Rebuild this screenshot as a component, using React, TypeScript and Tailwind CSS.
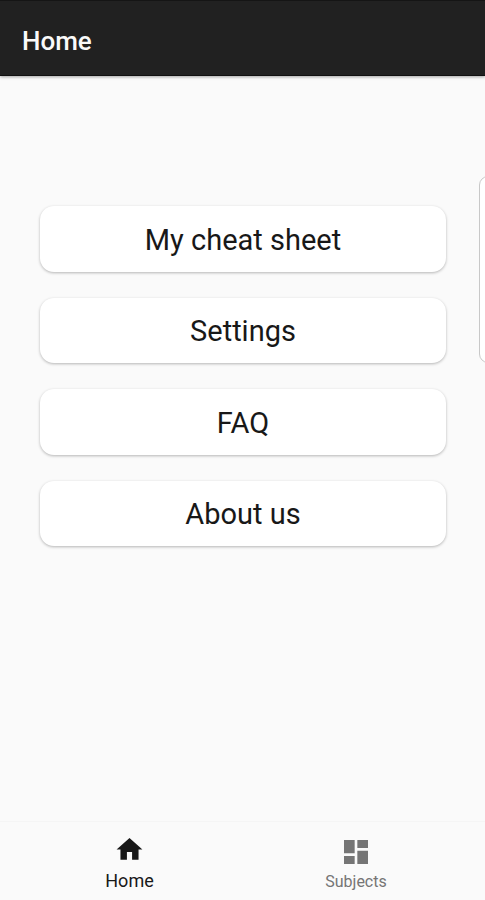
const items = ["My cheat sheet", "Settings", "FAQ", "About us"];

export default function App() {
  return (
    <div className="relative flex h-[900px] w-[485px] flex-col overflow-hidden bg-[#fafafa] font-[Roboto,sans-serif] text-[#181818]">
      <header className="flex h-[76px] shrink-0 items-center border-b border-t border-b-[#111] border-t-[#151515] bg-[#212121] pb-0 pl-[22px] pt-[5px] shadow-[0_1px_3px_rgba(0,0,0,0.35)]">
        <h1 className="text-[26px] font-medium leading-8 text-[#fafafa]">Home</h1>
      </header>
      <main className="flex flex-1 flex-col gap-[26px] px-10 pt-[130px]">
        {items.map((label) => (
          <button key={label} className="flex h-[65.5px] w-[406px] shrink-0 items-center justify-center rounded-[14px] bg-white pt-[3px] text-[29px] shadow-[0_1px_3px_rgba(0,0,0,0.28)]">
            {label}
          </button>
        ))}
      </main>
      <div className="absolute left-[479px] top-[176px] h-[187px] w-6 rounded-[9px] border border-[#c8c8c8] bg-white" />
      <nav className="flex h-[79px] shrink-0 border-t border-[#f5f5f5] bg-[#fafafa]">
        <div className="flex w-[259px] flex-col items-center pt-[12px]">
          <svg viewBox="0 0 24 24" className="h-[31px] w-[31px]" fill="#181818"><path d="M10 20v-6h4v6h5v-8h3L12 3 2 12h3v8z" /></svg>
          <span className="mt-[4px] text-[18px] leading-6">Home</span>
        </div>
        <div className="flex w-[194px] flex-col items-center pt-[14px] text-[#757575]">
          <svg viewBox="0 0 24 24" className="h-[32px] w-[32px]" fill="currentColor"><path d="M3 13h8V3H3v10zm0 8h8v-6H3v6zm10 0h8V11h-8v10zm0-18v6h8V3h-8z" /></svg>
          <span className="mt-[2px] text-[16px] leading-6">Subjects</span>
        </div>
      </nav>
    </div>
  );
}
